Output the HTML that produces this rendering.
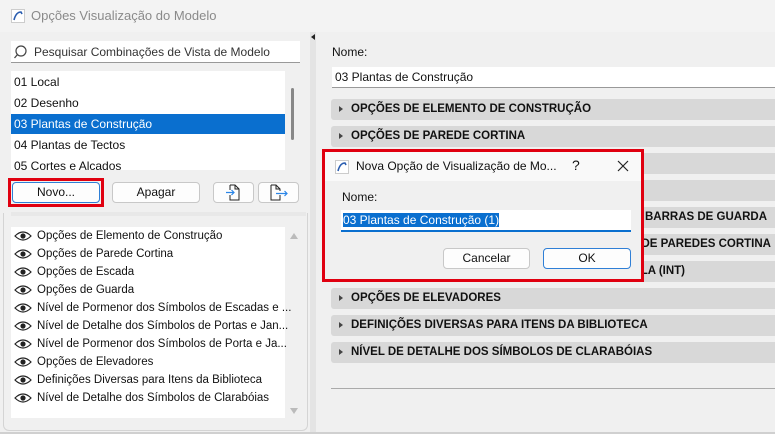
<!DOCTYPE html>
<html><head><meta charset="utf-8"><style>
*{box-sizing:border-box;margin:0;padding:0}
body{width:775px;height:434px;overflow:hidden;background:#f0f0f0;font-family:"Segoe UI","Liberation Sans",sans-serif;font-size:12px;color:#111;position:relative;white-space:nowrap}
.a{position:absolute}
.title{left:0;top:0;width:775px;height:32px;background:#f3f3f3;color:#8a8a8a;font-size:13px}
.btn{position:absolute;background:#fdfdfd;border:1px solid #c8c8c8;border-radius:4px;text-align:center;line-height:19px;font-size:12px}
.li{position:absolute;left:3px;height:20px;line-height:20px;width:272px}
.sec{position:absolute;left:331px;width:450px;height:21px;background:#d8d8d8;border-radius:3px;font-weight:bold;font-size:11.5px;line-height:21px;padding-left:20px;color:#111}
.sec:before{content:"";position:absolute;left:8px;top:7px;border-left:4px solid #444;border-top:3.5px solid transparent;border-bottom:3.5px solid transparent}
.sec span{position:absolute}
.eye{position:absolute;left:3px;width:18px;height:10px}
.it{position:absolute;left:26px;font-size:11.5px;line-height:14px;white-space:nowrap}
</style></head><body>
<div class="a title">
<svg class="a" style="left:11px;top:9px" width="14" height="14"><rect x="0.5" y="0.5" width="13" height="13" fill="#fff" stroke="#ccc"/><path d="M3 11 Q5 3 10 3 L11 5" fill="none" stroke="#2a5db0" stroke-width="1.6"/></svg>
<span class="a" style="left:31px;top:8px">Opções Visualização do Modelo</span></div>
<!-- left -->
<div class="a" style="left:11px;top:41px;width:289px;height:22px;background:#fff;border-bottom:1px solid #999"></div>
<svg class="a" style="left:14px;top:45px" width="14" height="14"><circle cx="7" cy="6" r="5" fill="none" stroke="#444" stroke-width="1.2"/><path d="M3.5 9.5 L0.5 13" stroke="#444" stroke-width="1.3"/></svg>
<span class="a" style="left:34px;top:45px;font-size:12px;color:#333">Pesquisar Combinações de Vista de Modelo</span>
<div class="a" style="left:11px;top:71px;width:274px;height:99px;background:#fff;overflow:hidden">
<div class="li" style="top:1px">01 Local</div>
<div class="li" style="top:22px">02 Desenho</div>
<div class="li" style="top:43px;left:0;width:274px;padding-left:3px;background:#0a6fcf;color:#fff">03 Plantas de Construção</div>
<div class="li" style="top:64px">04 Plantas de Tectos</div>
<div class="li" style="top:85px">05 Cortes e Alçados</div>
</div>
<div class="a" style="left:291px;top:88px;width:3px;height:52px;background:#888;border-radius:2px"></div>
<div class="a" style="left:8px;top:178px;width:96px;height:29px;border:3px solid #e00010"></div>
<div class="btn" style="left:12px;top:182px;width:88px;height:21px;border-color:#2f7fd6">Novo...</div>
<div class="btn" style="left:112px;top:182px;width:88px;height:21px">Apagar</div>
<div class="btn" style="left:213px;top:182px;width:41px;height:21px"></div>
<div class="btn" style="left:258px;top:182px;width:41px;height:21px"></div>
<svg class="a" style="left:226px;top:184px" width="16" height="17"><path d="M4 1h5l4 4v11H4v-5M4 6V1" fill="none" stroke="#222"/><path d="M9 1v4h4" fill="none" stroke="#222"/><path d="M0 8.5h8M5.5 6l2.5 2.5-2.5 2.5" fill="none" stroke="#2b86e8" stroke-width="1.2"/></svg>
<svg class="a" style="left:269px;top:184px" width="20" height="17"><path d="M2 1h5l4 4v2M11 11v5H2V1" fill="none" stroke="#222"/><path d="M7 1v4h4" fill="none" stroke="#222"/><path d="M7 9.5h11M15.5 7l2.5 2.5-2.5 2.5" fill="none" stroke="#2b86e8" stroke-width="1.2"/></svg>
<div class="a" style="left:3px;top:213px;width:305px;height:218px;border:1px solid #d4d4d4;border-top:none;border-radius:0 0 6px 6px"></div>
<div class="a" style="left:11px;top:212px;width:295px;height:4px;background:#e8e8e8"></div>
<div class="a" style="left:11px;top:227px;width:274px;height:191px;background:#fff"></div>
<div class="a" style="left:290px;top:233px;border-bottom:6px solid #bbb;border-left:4px solid transparent;border-right:4px solid transparent"></div>
<div class="a" style="left:290px;top:408px;border-top:6px solid #bbb;border-left:4px solid transparent;border-right:4px solid transparent"></div>
<div class="a" style="left:11px;top:229px;width:274px;height:191px">
<svg class="eye" style="top:2px" viewBox="0 0 18 10"><path d="M1 5Q9-3 17 5Q9 13 1 5Z" fill="none" stroke="#222" stroke-width="1.2"/><circle cx="9" cy="5" r="2.6" fill="#222"/></svg><span class="it" style="top:0px">Opções de Elemento de Construção</span>
<svg class="eye" style="top:20px" viewBox="0 0 18 10"><path d="M1 5Q9-3 17 5Q9 13 1 5Z" fill="none" stroke="#222" stroke-width="1.2"/><circle cx="9" cy="5" r="2.6" fill="#222"/></svg><span class="it" style="top:18px">Opções de Parede Cortina</span>
<svg class="eye" style="top:38px" viewBox="0 0 18 10"><path d="M1 5Q9-3 17 5Q9 13 1 5Z" fill="none" stroke="#222" stroke-width="1.2"/><circle cx="9" cy="5" r="2.6" fill="#222"/></svg><span class="it" style="top:36px">Opções de Escada</span>
<svg class="eye" style="top:56px" viewBox="0 0 18 10"><path d="M1 5Q9-3 17 5Q9 13 1 5Z" fill="none" stroke="#222" stroke-width="1.2"/><circle cx="9" cy="5" r="2.6" fill="#222"/></svg><span class="it" style="top:54px">Opções de Guarda</span>
<svg class="eye" style="top:74px" viewBox="0 0 18 10"><path d="M1 5Q9-3 17 5Q9 13 1 5Z" fill="none" stroke="#222" stroke-width="1.2"/><circle cx="9" cy="5" r="2.6" fill="#222"/></svg><span class="it" style="top:72px">Nível de Pormenor dos Símbolos de Escadas e ...</span>
<svg class="eye" style="top:92px" viewBox="0 0 18 10"><path d="M1 5Q9-3 17 5Q9 13 1 5Z" fill="none" stroke="#222" stroke-width="1.2"/><circle cx="9" cy="5" r="2.6" fill="#222"/></svg><span class="it" style="top:90px">Nível de Detalhe dos Símbolos de Portas e Jan...</span>
<svg class="eye" style="top:110px" viewBox="0 0 18 10"><path d="M1 5Q9-3 17 5Q9 13 1 5Z" fill="none" stroke="#222" stroke-width="1.2"/><circle cx="9" cy="5" r="2.6" fill="#222"/></svg><span class="it" style="top:108px">Nível de Pormenor dos Símbolos de Porta e Ja...</span>
<svg class="eye" style="top:128px" viewBox="0 0 18 10"><path d="M1 5Q9-3 17 5Q9 13 1 5Z" fill="none" stroke="#222" stroke-width="1.2"/><circle cx="9" cy="5" r="2.6" fill="#222"/></svg><span class="it" style="top:126px">Opções de Elevadores</span>
<svg class="eye" style="top:146px" viewBox="0 0 18 10"><path d="M1 5Q9-3 17 5Q9 13 1 5Z" fill="none" stroke="#222" stroke-width="1.2"/><circle cx="9" cy="5" r="2.6" fill="#222"/></svg><span class="it" style="top:144px">Definições Diversas para Itens da Biblioteca</span>
<svg class="eye" style="top:164px" viewBox="0 0 18 10"><path d="M1 5Q9-3 17 5Q9 13 1 5Z" fill="none" stroke="#222" stroke-width="1.2"/><circle cx="9" cy="5" r="2.6" fill="#222"/></svg><span class="it" style="top:162px">Nível de Detalhe dos Símbolos de Clarabóias</span>
</div>
<!-- divider -->
<div class="a" style="left:310px;top:32px;width:6px;height:402px;background:#e4e4e4"></div>
<div class="a" style="left:311px;top:34px;border-right:4px solid #222;border-top:3.5px solid transparent;border-bottom:3.5px solid transparent"></div>
<!-- right -->
<span class="a" style="left:332px;top:45px">Nome:</span>
<div class="a" style="left:332px;top:67px;width:443px;height:21px;background:#fff;border-bottom:1px solid #999;padding:3px 3px;line-height:14px">03 Plantas de Construção</div>
<div class="sec" style="top:99px">OPÇÕES DE ELEMENTO DE CONSTRUÇÃO</div>
<div class="sec" style="top:126px">OPÇÕES DE PAREDE CORTINA</div>
<div class="sec" style="top:153px">OPÇÕES DE ESCADA</div>
<div class="sec" style="top:180px">OPÇÕES DE GUARDA</div>
<div class="sec" style="top:207px"><span style="right:14px">OPÇÕES DE CORRIMÃOS E BARRAS DE GUARDA</span></div>
<div class="sec" style="top:234px"><span style="right:10px">OPÇÕES DE COMPONENTES DE PAREDES CORTINA</span></div>
<div class="sec" style="top:261px"><span style="right:96px">OPÇÕES DE PORTA E JANELA (INT)</span></div>
<div class="sec" style="top:288px">OPÇÕES DE ELEVADORES</div>
<div class="sec" style="top:315px">DEFINIÇÕES DIVERSAS PARA ITENS DA BIBLIOTECA</div>
<div class="sec" style="top:342px">NÍVEL DE DETALHE DOS SÍMBOLOS DE CLARABÓIAS</div>
<div class="a" style="left:331px;top:388px;width:444px;height:1px;background:#aaa"></div>
<div class="a" style="left:0;top:432px;width:775px;height:2px;background:#d0d0d0"></div>
<!-- dialog -->
<div class="a" style="left:322px;top:149px;width:322px;height:133px;border:3px solid #e00010;background:#f0f0f0">
<div class="a" style="left:0;top:0;width:316px;height:29px;background:#f9f9f9"></div>
<svg class="a" style="left:10px;top:8px" width="14" height="14"><rect x="0.5" y="0.5" width="13" height="13" fill="#fff" stroke="#ccc"/><path d="M3 11 Q5 3 10 3 L11 5" fill="none" stroke="#2a5db0" stroke-width="1.6"/></svg>
<span class="a" style="left:31px;top:7px;font-size:12px">Nova Opção de Visualização de Mo...</span>
<span class="a" style="left:247px;top:5px;font-size:14px">?</span>
<svg class="a" style="left:292px;top:8px" width="12" height="12"><path d="M1 1L11 11M11 1L1 11" stroke="#222" stroke-width="1.2"/></svg>
<span class="a" style="left:17px;top:38px">Nome:</span>
<div class="a" style="left:16px;top:58px;width:290px;height:22px;background:#fff;border-bottom:2px solid #0a6fcf;padding:3px 2px"><span style="background:#0a6fcf;color:#fff;line-height:14px">03 Plantas de Construção (1)</span></div>
<div class="btn" style="left:118px;top:96px;width:87px;height:21px">Cancelar</div>
<div class="btn" style="left:218px;top:96px;width:88px;height:21px;border-color:#2f7fd6">OK</div>
</div>
</body></html>
